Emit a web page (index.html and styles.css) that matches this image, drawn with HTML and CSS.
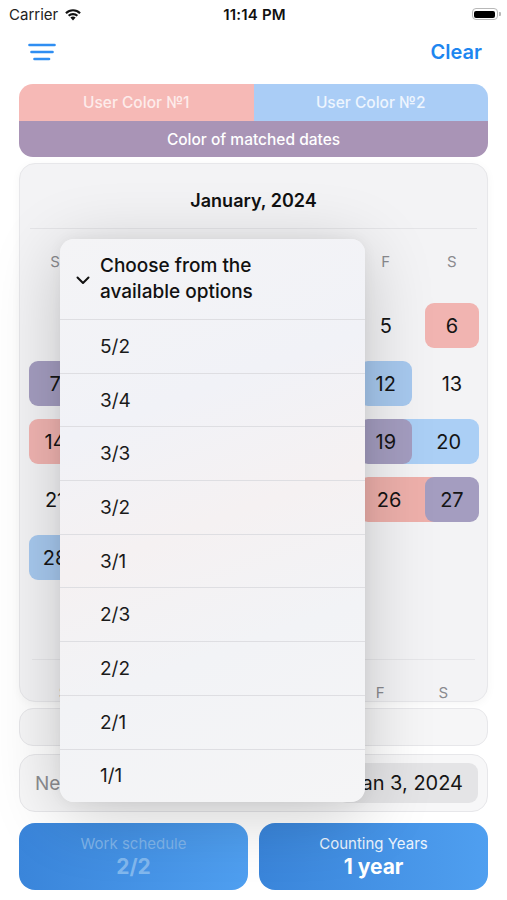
FILE: index.html
```html
<!DOCTYPE html>
<html lang="en">
<head>
    <meta charset="UTF-8">
    <meta name="viewport" content="width=device-width, initial-scale=1.0">
    <title>Shift calendar</title>
    <link rel="stylesheet" href="styles.css">
</head>
<body>
    <div class="screen">
        <div class="status-bar">
            <div class="carrier">
                Carrier
                <svg class="wifi" width="18" height="13" viewBox="0 0 18 13">
                    <path d="M9 12.5 L6.4 9.6 A3.8 3.8 0 0 1 11.6 9.6 Z" fill="#111"/>
                    <path d="M3.9 7.1 A7.4 7.4 0 0 1 14.1 7.1 L12.6 8.6 A5.3 5.3 0 0 0 5.4 8.6 Z" fill="#111"/>
                    <path d="M1.2 4.4 A11.2 11.2 0 0 1 16.8 4.4 L15.3 5.9 A9.1 9.1 0 0 0 2.7 5.9 Z" fill="#111"/>
                </svg>
            </div>
            <div class="time">11:14 PM</div>
            <div class="battery"><span></span></div>
        </div>

        <div class="nav">
            <svg class="menu-icon" width="28" height="18" viewBox="0 0 28 18">
                <line x1="1.5" y1="2" x2="26.5" y2="2"/>
                <line x1="3.5" y1="9" x2="24.5" y2="9"/>
                <line x1="6.5" y1="16" x2="21" y2="16"/>
            </svg>
            <div class="clear">Clear</div>
        </div>

        <div class="legend">
            <div class="legend-row">
                <div class="legend-item user-1">User Color №1</div>
                <div class="legend-item user-2">User Color №2</div>
            </div>
            <div class="legend-item matched">Color of matched dates</div>
        </div>

        <div class="calendar">
            <div class="month-title">January, 2024</div>
            <div class="week">
                <span>S</span><span></span><span></span><span></span><span></span><span>F</span><span>S</span>
            </div>
            <!-- middle columns sit under the open menu -->
            <div class="days">
                <div class="day"></div>
                <div class="day"></div>
                <div class="day pink"></div>
                <div class="day blue"></div>
                <div class="day"></div>
                <div class="day">5</div>
                <div class="day pink">6</div>

                <div class="day purple">7</div>
                <div class="day"></div>
                <div class="day blue"></div>
                <div class="day pink"></div>
                <div class="day"></div>
                <div class="day blue">12</div>
                <div class="day">13</div>

                <div class="day pink">14</div>
                <div class="day"></div>
                <div class="day purple"></div>
                <div class="day"></div>
                <div class="day pink"></div>
                <div class="day purple top">19</div>
                <div class="day blue join-l">20</div>

                <div class="day">21</div>
                <div class="day blue"></div>
                <div class="day"></div>
                <div class="day purple"></div>
                <div class="day"></div>
                <div class="day pink join-r">26</div>
                <div class="day purple top">27</div>

                <div class="day blue">28</div>
                <div class="day"></div>
                <div class="day pink"></div>
                <div class="day"></div>
                <div class="day"></div>
                <div class="day"></div>
                <div class="day"></div>

                <div class="day"></div>
                <div class="day"></div>
                <div class="day"></div>
                <div class="day"></div>
                <div class="day"></div>
                <div class="day"></div>
                <div class="day"></div>
            </div>
            <div class="week next-week">
                <span>S</span><span></span><span></span><span></span><span></span><span>F</span><span>S</span>
            </div>
        </div>

        <div class="empty-row"></div>

        <div class="date-row">
            <span class="date-label">New</span>
            <span class="date-pill">Jan 3, 2024</span>
        </div>

        <div class="actions">
            <div class="action faded">
                <div class="action-title">Work schedule</div>
                <div class="action-value">2/2</div>
            </div>
            <div class="action">
                <div class="action-title">Counting Years</div>
                <div class="action-value">1 year</div>
            </div>
        </div>

        <div class="dropdown">
            <div class="dropdown-head">
                <svg class="chevron" width="14" height="9" viewBox="0 0 14 9">
                    <path d="M1.5 1.5 L7 7 L12.5 1.5"/>
                </svg>
                <div class="dropdown-title">Choose from the available options</div>
            </div>
            <div class="option">5/2</div>
            <div class="option">3/4</div>
            <div class="option">3/3</div>
            <div class="option">3/2</div>
            <div class="option">3/1</div>
            <div class="option">2/3</div>
            <div class="option">2/2</div>
            <div class="option">2/1</div>
            <div class="option">1/1</div>
        </div>
    </div>
</body>
</html>
```

FILE: styles.css
```css
* {
    margin: 0;
    padding: 0;
    box-sizing: border-box;
}

body {
    background-color: #fff;
    font-family: Inter, "Noto Sans", sans-serif;
    color: #111;
}

.screen {
    width: 507px;
    height: 900px;
    position: relative;
    overflow: hidden;
    background-color: #fff;
}

/* status bar */
.status-bar {
    height: 28px;
    padding: 0 7px 0 9px;
    display: flex;
    align-items: center;
    justify-content: space-between;
    font-size: 15px;
}

.status-bar .carrier {
    width: 120px;
    display: flex;
    align-items: center;
    gap: 6px;
    color: #222;
}

.status-bar .time {
    font-weight: 600;
    letter-spacing: .2px;
}

.status-bar .battery {
    width: 120px;
    display: flex;
    justify-content: flex-end;
    position: relative;
}

.status-bar .battery span {
    width: 26px;
    height: 12px;
    border: 1.5px solid #b8b8b8;
    border-radius: 4px;
    padding: 1.5px;
    position: relative;
    margin-right: 2px;
}

.status-bar .battery span:before {
    content: '';
    display: block;
    width: 100%;
    height: 100%;
    border-radius: 2px;
    background-color: #000;
}

.status-bar .battery span:after {
    content: '';
    position: absolute;
    right: -4px;
    top: 2.5px;
    width: 2px;
    height: 4px;
    border-radius: 0 1px 1px 0;
    background-color: #b8b8b8;
}

/* nav */
.nav {
    height: 48px;
    padding: 0 25px 0 28px;
    display: flex;
    align-items: center;
    justify-content: space-between;
}

.menu-icon line {
    stroke: #2f8ef2;
    stroke-width: 2.6;
    stroke-linecap: round;
}

.clear {
    color: #1d86f0;
    font-size: 20px;
    font-weight: 600;
}

/* legend */
.legend {
    margin: 8px 19px 0;
    height: 73px;
    border-radius: 14px;
    overflow: hidden;
    display: flex;
    flex-direction: column;
}

.legend-row {
    display: flex;
    height: 37px;
}

.legend-item {
    flex: 1;
    display: flex;
    align-items: center;
    justify-content: center;
    color: #fff;
    font-size: 15.5px;
    font-weight: 500;
}

.legend .user-1 {
    background-color: #f6b9b6;
    color: #fdeceb;
}

.legend .user-2 {
    background-color: #aacdf6;
    color: #eef5fe;
}

.legend .matched {
    background-color: #a994b6;
}

/* calendar */
.calendar {
    margin: 6px 19px 0;
    height: 539px;
    border: 1px solid #e7e7ea;
    border-radius: 16px;
    background-color: #f3f3f5;
    overflow: hidden;
    box-shadow: 0 2px 10px rgba(0,0,0,.04);
}

.month-title {
    height: 65px;
    line-height: 74px;
    text-align: center;
    font-size: 18px;
    font-weight: 600;
    border-bottom: 1px solid #e4e4e7;
    margin: 0 10px;
}

.week {
    display: grid;
    grid-template-columns: repeat(7, 1fr);
    margin: 23px 2px 0;
    height: 20px;
    line-height: 20px;
    text-align: center;
    font-size: 15px;
    color: #8a8a8e;
}

.days {
    display: grid;
    grid-template-columns: repeat(7, 1fr);
    grid-auto-rows: 45px;
    row-gap: 13px;
    margin: 31px 2px 0;
}

.day {
    margin: 0 6.5px;
    border-radius: 9px;
    display: flex;
    align-items: center;
    justify-content: center;
    font-size: 20px;
    color: #151515;
    z-index: 1;
}

.day.pink {
    background-color: #f1b4b1;
}

.day.blue {
    background-color: #a7c9ef;
}

.day.purple {
    background-color: #a49dc0;
}

.day.top {
    z-index: 2;
}

.day.join-l {
    margin-left: -25px;
    padding-left: 25px;
    border-top-left-radius: 0;
    border-bottom-left-radius: 0;
    background-color: #abcff5;
}

.day.join-r {
    margin-right: -25px;
    padding-right: 25px;
    border-top-right-radius: 0;
    border-bottom-right-radius: 0;
    background-color: #eeb0ab;
}

.week.next-week {
    border-top: 1px solid #e6e6e9;
    margin: 21px 12px 0;
    padding-top: 24px;
    height: auto;
    line-height: 18px;
    grid-template-columns: repeat(7, 1fr);
}

.empty-row {
    margin: 6px 19px 0;
    height: 38px;
    border: 1px solid #e7e7ea;
    border-radius: 14px;
    background-color: #f6f6f7;
}

.date-row {
    margin: 8px 19px 0;
    height: 58px;
    border: 1px solid #e7e7ea;
    border-radius: 16px;
    background-color: #f7f7f8;
    display: flex;
    align-items: center;
    justify-content: space-between;
    padding: 0 9px 0 15px;
}

.date-label {
    font-size: 19px;
    color: #8d8d91;
}

.date-pill {
    height: 40px;
    padding: 0 15px 0 12px;
    border-radius: 9px;
    background-color: #e4e4e6;
    font-size: 20px;
    display: flex;
    align-items: center;
    color: #151515;
}

/* bottom buttons */
.actions {
    margin: 11px 19px 0;
    display: flex;
    gap: 11px;
}

.action {
    flex: 1;
    height: 67px;
    border-radius: 16px;
    background: linear-gradient(90deg, #3a85da, #4f9ff0);
    display: flex;
    flex-direction: column;
    align-items: center;
    justify-content: center;
    color: #fff;
}

.action-title {
    font-size: 15px;
    color: #eaf3fd;
}

.action-value {
    font-size: 21px;
    font-weight: 700;
    margin-top: 1px;
}

.action.faded .action-title {
    color: #7fb4ea;
}

.action.faded .action-value {
    color: #82b8ee;
}

/* dropdown overlay */
.dropdown {
    position: absolute;
    z-index: 10;
    left: 60px;
    top: 239px;
    width: 305px;
    border-radius: 14px;
    overflow: hidden;
    background: linear-gradient(160deg, #f4f4f6 0%, #f1f2f7 30%, #f5f1f2 50%, #f2f3f6 70%, #f5f5f6 100%);
    box-shadow: 0 12px 70px rgba(0,0,0,.2), 0 0 14px rgba(0,0,0,.05);
}

.dropdown-head {
    height: 80px;
    display: flex;
    align-items: center;
    padding: 0 0 0 16px;
}

.chevron {
    margin-right: 10px;
    margin-top: 2px;
}

.chevron path {
    fill: none;
    stroke: #111;
    stroke-width: 2;
    stroke-linecap: round;
    stroke-linejoin: round;
}

.dropdown-title {
    font-size: 19px;
    font-weight: 500;
    line-height: 26px;
    width: 180px;
    color: #111;
}

.option {
    height: 53.7px;
    border-top: 1px solid #dedee2;
    display: flex;
    align-items: center;
    padding-left: 40px;
    font-size: 19px;
    color: #1a1a1a;
}
```
